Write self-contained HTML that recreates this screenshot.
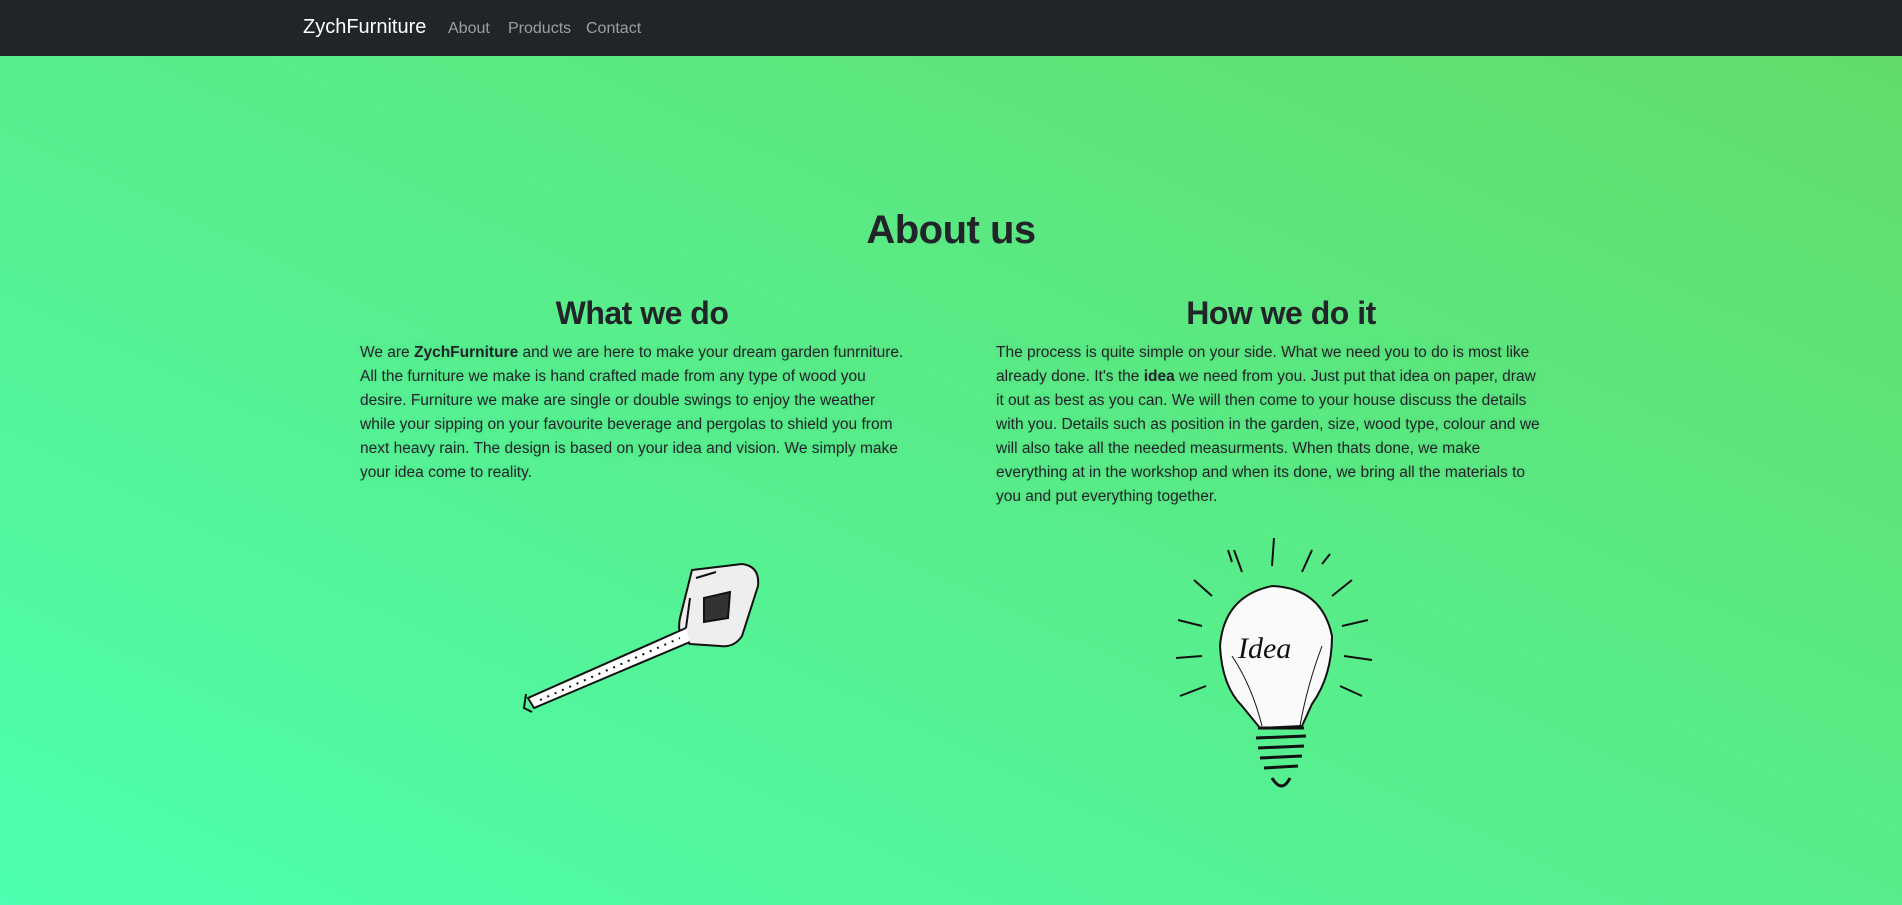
<!DOCTYPE html>
<html><head><meta charset="utf-8"><style>
*{margin:0;padding:0;box-sizing:border-box}
body{width:1902px;height:905px;overflow:hidden;font-family:"Liberation Sans",sans-serif;color:#212529;
background:linear-gradient(to top right,#4dffb0 0%,#58ed8a 50%,#62db68 100%);position:relative}
nav{position:absolute;left:0;top:0;width:1902px;height:56px;background:#212529}
nav .brand{position:absolute;left:303px;top:16px;color:#fff;font-size:20px}
nav a{position:absolute;top:20px;color:rgba(255,255,255,.55);font-size:16px;text-decoration:none}
h1{position:absolute;left:0;width:1902px;text-align:center;top:208px;font-size:40px;font-weight:bold;letter-spacing:-0.5px}
h2{position:absolute;text-align:center;font-size:32px;font-weight:bold;top:295px;letter-spacing:-0.5px}
p{position:absolute;font-size:15.5px;line-height:24px;white-space:nowrap;top:341px;text-shadow:0 0 6px rgba(0,0,0,.12)}
svg{position:absolute}
</style></head><body>
<nav><span class="brand">ZychFurniture</span><a style="left:448px">About</a><a style="left:508px">Products</a><a style="left:586px">Contact</a></nav>
<h1>About us</h1>
<h2 style="left:357px;width:570px">What we do</h2>
<h2 style="left:996px;width:570px">How we do it</h2>
<p style="left:360px">We are <b>ZychFurniture</b> and we are here to make your dream garden funrniture.<br>All the furniture we make is hand crafted made from any type of wood you<br>desire. Furniture we make are single or double swings to enjoy the weather<br>while your sipping on your favourite beverage and pergolas to shield you from<br>next heavy rain. The design is based on your idea and vision. We simply make<br>your idea come to reality.</p>
<p style="left:996px">The process is quite simple on your side. What we need you to do is most like<br>already done. It's the <b>idea</b> we need from you. Just put that idea on paper, draw<br>it out as best as you can. We will then come to your house discuss the details<br>with you. Details such as position in the garden, size, wood type, colour and we<br>will also take all the needed measurments. When thats done, we make<br>everything at in the workshop and when its done, we bring all the materials to<br>you and put everything together.</p>
<svg style="left:520px;top:558px" width="246" height="156" viewBox="0 0 246 156" fill="none" stroke="#111" stroke-width="2">
<path d="M172 12 L222 6 Q240 8 238 28 L222 78 Q214 90 200 88 L170 86 Q156 80 160 60 Z" fill="#eee"/>
<path d="M184 40 L210 34 L208 60 L184 64 Z" fill="#333"/>
<path d="M176 20 L196 14 M170 40 L166 70"/>
<path d="M166 70 L8 140 L14 150 L170 84" fill="#fff"/>
<path d="M20 142 L160 80" stroke-dasharray="2 6"/>
<path d="M6 136 L4 150 L12 154"/>
</svg>
<svg style="left:1172px;top:536px" width="226" height="262" viewBox="0 0 226 262" fill="none" stroke="#111" stroke-width="2">
<path d="M70 170 Q50 150 48 110 Q52 60 100 50 Q150 52 160 100 Q160 140 140 168 L130 190 L88 192 Z" fill="#fafafa"/>
<path d="M60 120 Q80 150 90 190 M150 110 Q135 150 128 190" stroke-width="1"/>
<path d="M86 192 L132 192 M84 202 L134 200 M86 212 L132 210 M88 222 L130 220 M92 232 L126 230 M100 242 Q110 258 118 242" stroke-width="3"/>
<text x="66" y="122" font-family="Liberation Serif,serif" font-style="italic" font-size="30" fill="#111" stroke="none">Idea</text>
<path d="M100 30 L102 2 M70 36 L62 14 M130 36 L140 14 M40 60 L22 44 M160 60 L180 44 M30 90 L6 84 M170 90 L196 84 M30 120 L4 122 M172 120 L200 124 M34 150 L8 160 M168 150 L190 160 M60 26 L56 14 M150 28 L158 18"/>
</svg>
</body></html>
